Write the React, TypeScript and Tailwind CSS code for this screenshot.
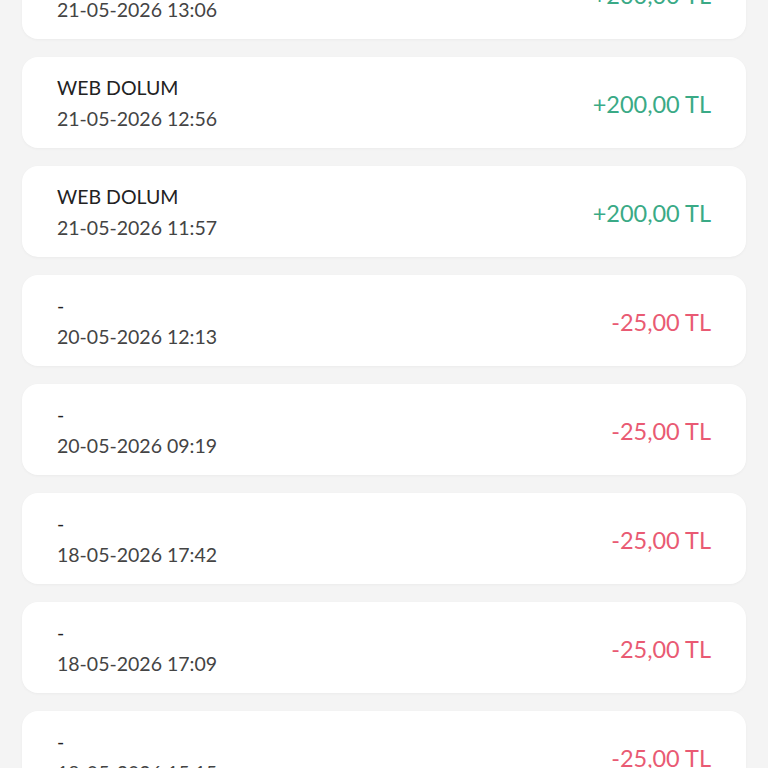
import React from 'react';

type Tx = { title: string; date: string; amount: string; positive: boolean };

const items: Tx[] = [
  { title: 'WEB DOLUM', date: '21-05-2026 13:06', amount: '+200,00 TL', positive: true },
  { title: 'WEB DOLUM', date: '21-05-2026 12:56', amount: '+200,00 TL', positive: true },
  { title: 'WEB DOLUM', date: '21-05-2026 11:57', amount: '+200,00 TL', positive: true },
  { title: '-', date: '20-05-2026 12:13', amount: '-25,00 TL', positive: false },
  { title: '-', date: '20-05-2026 09:19', amount: '-25,00 TL', positive: false },
  { title: '-', date: '18-05-2026 17:42', amount: '-25,00 TL', positive: false },
  { title: '-', date: '18-05-2026 17:09', amount: '-25,00 TL', positive: false },
  { title: '-', date: '18-05-2026 15:15', amount: '-25,00 TL', positive: false },
];

const App: React.FC = () => {
  return (
    <div
      className="w-[768px] h-[768px] overflow-hidden bg-[#f4f4f4]"
      style={{ fontFamily: 'Lato, "Open Sans", sans-serif' }}
    >
      <div className="flex flex-col gap-[18px] px-[22px] mt-[-52px]">
        {items.map((tx, i) => (
          <div
            key={i}
            className="flex items-center justify-between h-[91px] shrink-0 px-[35px] bg-white rounded-[16px] shadow-[0_1px_3px_rgba(0,0,0,0.04)]"
          >
            <div className="flex flex-col">
              <span className="text-[19.5px] leading-[31px] text-[#222222]">{tx.title}</span>
              <span className="text-[19.5px] leading-[31px] text-[#444444]">{tx.date}</span>
            </div>
            <span
              className={
                'text-[23.5px] mt-[5px] ' + (tx.positive ? 'text-[#3aaa86]' : 'text-[#e95a73]')
              }
            >
              {tx.amount}
            </span>
          </div>
        ))}
      </div>
    </div>
  );
};

export default App;
